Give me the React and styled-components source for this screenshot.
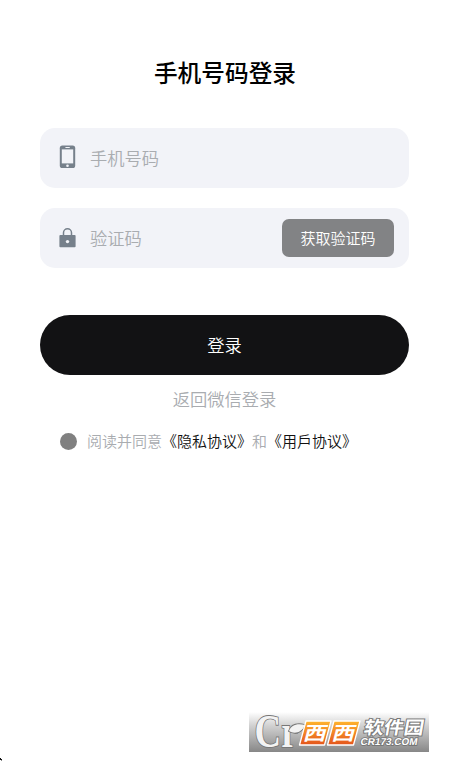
import styled, { createGlobalStyle } from "styled-components";

export default function PhoneLogin() {
  return (
    <>
      <GlobalStyle />
      <LoginWrapper>
        <Title>手机号码登录</Title>
        <Field>
          <PhoneIcon />
          <Input type="text" placeholder="手机号码" />
        </Field>
        <Field>
          <LockIcon />
          <Input type="text" placeholder="验证码" />
          <CodeButton>获取验证码</CodeButton>
        </Field>
        <LoginButton>登录</LoginButton>
        <BackButton>返回微信登录</BackButton>
        <Agreement>
          <RadioDot />
          <p>
            阅读并同意<b>《隐私协议》</b>和<b>《用戶协议》</b>
          </p>
        </Agreement>
        <Footer>
          <CornerMark viewBox="0 0 3 4">
            <path d="M0 0h1v1h1v1H0z" fill="#111" />
            <path d="M1 2h1v1H1z" fill="#888" />
          </CornerMark>
          <SiteLogo />
        </Footer>
      </LoginWrapper>
    </>
  );
}

function PhoneIcon() {
  return (
    <FieldIcon viewBox="0 0 18 24">
      <rect x="0.8" y="0.6" width="15.4" height="22.4" rx="2.6" fill="#76808b" />
      <rect x="2.8" y="4.4" width="11.4" height="14" fill="#f2f3f8" />
      <rect x="6.3" y="2.1" width="4.6" height="1" rx="0.5" fill="#f2f3f8" />
      <circle cx="8.5" cy="20.8" r="1.3" fill="#f2f3f8" />
    </FieldIcon>
  );
}

function LockIcon() {
  return (
    <FieldIcon viewBox="0 0 18 24">
      <path
        d="M4.5 10.5V7.8a4 4 0 0 1 8 0v2.7"
        fill="none"
        stroke="#76808b"
        strokeWidth="1.5"
      />
      <rect x="0.4" y="10" width="16.2" height="12.3" rx="1" fill="#76808b" />
      <circle cx="8.5" cy="16.6" r="1.7" fill="#f2f3f8" />
    </FieldIcon>
  );
}

function SiteLogo() {
  return (
    <LogoSvg viewBox="0 0 180 40">
      <defs>
        <linearGradient id="logoBack" x1="0" y1="0" x2="0" y2="1">
          <stop offset="0" stopColor="#fff" />
          <stop offset="0.35" stopColor="#d0d0d0" />
          <stop offset="1" stopColor="#878787" />
        </linearGradient>
        <linearGradient id="logoOrange" x1="0" y1="0" x2="0" y2="1">
          <stop offset="0" stopColor="#ffb52e" />
          <stop offset="1" stopColor="#e4541c" />
        </linearGradient>
      </defs>
      <rect width="180" height="40" fill="url(#logoBack)" />
      <g fill="#f3f3f3" stroke="#777" strokeWidth="1.8" paintOrder="stroke">
        <LogoText
          x="5.5"
          y="35"
          $size={47}
          $family="Liberation Serif"
          $bold
          textLength="43"
          lengthAdjust="spacingAndGlyphs"
        >
          Cr
        </LogoText>
        <path d="M40 19c2-6 8-8 16-6-3 7-9 9-14 7z" />
      </g>
      <g stroke="#fff" strokeWidth="1.3" strokeLinejoin="round">
        <path d="M57 9h25l-6.5 24H50.5z" fill="url(#logoOrange)" />
        <path d="M85 9h26l-6.5 24H78.5z" fill="url(#logoOrange)" />
      </g>
      <g transform="skewX(-15)" fill="#fff">
        <LogoText
          x="61"
          y="28"
          $size={19}
          $bold
          textLength="23"
          lengthAdjust="spacingAndGlyphs"
        >
          西
        </LogoText>
        <LogoText
          x="89.5"
          y="28"
          $size={19}
          $bold
          textLength="23"
          lengthAdjust="spacingAndGlyphs"
        >
          西
        </LogoText>
      </g>
      <g
        transform="skewX(-10)"
        fill="#fff"
        stroke="#777"
        strokeWidth="1.8"
        paintOrder="stroke"
      >
        <LogoText
          x="118"
          y="22.5"
          $size={18}
          $bold
          textLength="60"
          lengthAdjust="spacingAndGlyphs"
        >
          软件园
        </LogoText>
        <LogoText
          x="117"
          y="33.5"
          $size={10}
          $family="Liberation Sans"
          $bold
          textLength="57"
          lengthAdjust="spacingAndGlyphs"
        >
          CR173.COM
        </LogoText>
      </g>
    </LogoSvg>
  );
}

const GlobalStyle = createGlobalStyle`
  * {
    box-sizing: border-box;
  }

  body {
    margin: 0;
    background: #fff;
  }

  body, input, button {
    font-family: "Noto Sans CJK SC", sans-serif;
  }

  h1, p {
    margin: 0;
  }

  button {
    border: none;
    padding: 0;
  }
`;

const LoginWrapper = styled.div`
  width: 449px;
  height: 762px;
  padding: 54px 40px 0;
  display: flex;
  flex-direction: column;
  overflow: hidden;
`;

const Title = styled.h1`
  height: 36px;
  margin-bottom: 38px;
  font-size: 23.7px;
  font-weight: 500;
  line-height: 36px;
  text-align: center;
  text-indent: 1px;
  color: #000;
`;

const Field = styled.div`
  display: flex;
  align-items: center;
  height: 60px;
  margin-bottom: 20px;
  padding: 0 15px 0 19px;
  border-radius: 15px;
  background: #f2f3f8;
`;

const FieldIcon = styled.svg`
  flex: none;
  width: 18px;
  height: 24px;
  margin-right: 13px;
  margin-bottom: 2px;
`;

const Input = styled.input`
  flex: 1;
  min-width: 0;
  height: 40px;
  padding: 0 0 2px;
  border: none;
  outline: none;
  background: transparent;
  font-size: 17.25px;
  font-weight: 350;

  &::placeholder {
    color: #a9acb0;
    opacity: 1;
  }
`;

const CodeButton = styled.button`
  flex: none;
  width: 112px;
  height: 38px;
  padding-bottom: 2px;
  border-radius: 7px;
  background: #828385;
  color: #fff;
  font-size: 15px;
  font-weight: 350;
`;

const LoginButton = styled.button`
  flex: none;
  height: 60px;
  margin-top: 27px;
  padding-bottom: 2px;
  border-radius: 30px;
  background: #121214;
  color: #fff;
  font-size: 17.3px;
  font-weight: 350;
`;

const BackButton = styled.button`
  align-self: center;
  height: 26px;
  margin-top: 11px;
  background: transparent;
  color: #a9acb0;
  font-size: 17.3px;
  font-weight: 350;
  line-height: 26px;
`;

const Agreement = styled.div`
  display: flex;
  align-items: center;
  height: 24px;
  margin-top: 17px;
  padding-left: 20px;
  color: #a9acb0;
  font-size: 15px;
  font-weight: 350;
  line-height: 24px;
  white-space: nowrap;

  b {
    color: #111;
    font-weight: 350;
  }
`;

const RadioDot = styled.span`
  width: 17px;
  height: 17px;
  margin-right: 10px;
  border-radius: 50%;
  background: #808080;
`;

const Footer = styled.footer`
  display: flex;
  align-items: flex-end;
  justify-content: space-between;
  height: 50px;
  margin: auto -20px 0 -40px;
`;

const CornerMark = styled.svg`
  width: 3px;
  height: 4px;
`;

const LogoSvg = styled.svg`
  width: 180px;
  height: 40px;
  align-self: flex-start;
  overflow: visible;
`;

const LogoText = styled.text`
  font-family: ${({ $family }) => `"${$family || "Noto Sans CJK SC"}", sans-serif`};
  font-size: ${({ $size }) => $size}px;
  font-weight: ${({ $bold }) => ($bold ? 700 : 400)};
`;
